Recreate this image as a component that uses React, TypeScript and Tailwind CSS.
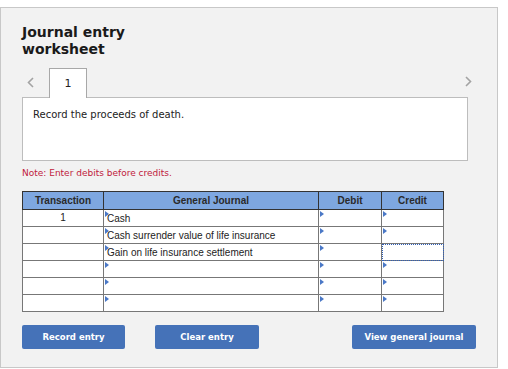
const rows = [
  { tx: "1", account: "Cash", focus: false },
  { tx: "", account: "Cash surrender value of life insurance", focus: false },
  { tx: "", account: "Gain on life insurance settlement", focus: true },
  { tx: "", account: "", focus: false },
  { tx: "", account: "", focus: false },
  { tx: "", account: "", focus: false },
];

function Marker() {
  return (
    <span className="absolute left-[1px] top-[1px] h-0 w-0 border-y-[3px] border-l-[4px] border-y-transparent border-l-[#4a78c6]" />
  );
}

function Chevron({ dir }: { dir: "left" | "right" }) {
  return (
    <svg width="7" height="11" viewBox="0 0 7 11" className="block">
      <path
        d={dir === "left" ? "M6 1 L1.5 5.5 L6 10" : "M1 1 L5.5 5.5 L1 10"}
        fill="none"
        stroke="#a3a3a3"
        strokeWidth="1.6"
      />
    </svg>
  );
}

export default function App() {
  return (
    <div className="h-[369px] w-[508px] bg-white pt-[7px] font-['DejaVu_Sans',sans-serif]">
      <div className="h-[361px] w-[498px] border border-[#c8c8c8] bg-[#f2f2f2] px-[21px] pt-[16px]">
        {/* Header */}
        <h1 className="w-[130px] text-[14px] font-bold leading-[17px] text-[#1a1a1a]">
          Journal entry worksheet
        </h1>

        {/* Tabs */}
        <div className="mt-[10px] flex items-center">
          <span className="ml-[5px] w-[22px]">
            <Chevron dir="left" />
          </span>
          <div className="relative z-10 -mb-px flex h-[30px] w-[38px] items-center justify-center border border-b-0 border-[#a8a8a8] bg-white pt-[2px] text-[11px] text-[#222]">
            1
          </div>
          <span className="ml-auto mr-[4px] -mt-[2px]">
            <Chevron dir="right" />
          </span>
        </div>

        {/* Question box */}
        <div className="h-[64px] w-[446px] border border-[#bdbdbd] bg-white px-[10px] pt-[10px] text-[10px] leading-[13px] text-[#222]">
          Record the proceeds of death.
        </div>

        <p className="mt-[7px] text-[9px] leading-[11px] text-[#c0203c]">
          Note: Enter debits before credits.
        </p>

        {/* Journal table */}
        <table className="mt-[12px] w-[421px] table-fixed border-collapse bg-white font-['Liberation_Sans',Arial,sans-serif] text-[10px] leading-[12px] text-[#222]">
          <colgroup>
            <col className="w-[81px]" />
            <col className="w-[215px]" />
            <col className="w-[63px]" />
            <col className="w-[62px]" />
          </colgroup>
          <thead>
            <tr className="h-[18px] bg-[#7ea7e0] text-[#2a2a2a]">
              <th className="border border-[#333] p-0 text-center font-bold">Transaction</th>
              <th className="border border-[#333] p-0 text-center font-bold">General Journal</th>
              <th className="border border-[#333] p-0 text-center font-bold">Debit</th>
              <th className="border border-[#333] p-0 text-center font-bold">Credit</th>
            </tr>
          </thead>
          <tbody>
            {rows.map((r, i) => (
              <tr key={i} className="h-[17px]">
                <td className="border border-[#777] p-0 text-center">{r.tx}</td>
                <td className="relative border border-[#777] p-0 pl-[3px] pt-[2px]">
                  <Marker />
                  {r.account}
                </td>
                <td className="relative border border-[#777] p-0">
                  <Marker />
                </td>
                {r.focus ? (
                  <td className="relative border border-[#777] p-0 outline-1 -outline-offset-1 outline-dotted outline-[#2f5fb8]" />
                ) : (
                  <td className="relative border border-[#777] p-0">
                    <Marker />
                  </td>
                )}
              </tr>
            ))}
          </tbody>
        </table>

        {/* Actions */}
        <div className="mt-[13px] flex text-[8.5px] font-bold text-white">
          <button className="h-[24px] w-[103px] rounded-[2px] bg-[#4572b8]">Record entry</button>
          <button className="ml-[30px] h-[24px] w-[104px] rounded-[2px] bg-[#4572b8]">Clear entry</button>
          <button className="ml-auto h-[24px] w-[124px] rounded-[2px] bg-[#4572b8]">View general journal</button>
        </div>
      </div>
    </div>
  );
}
